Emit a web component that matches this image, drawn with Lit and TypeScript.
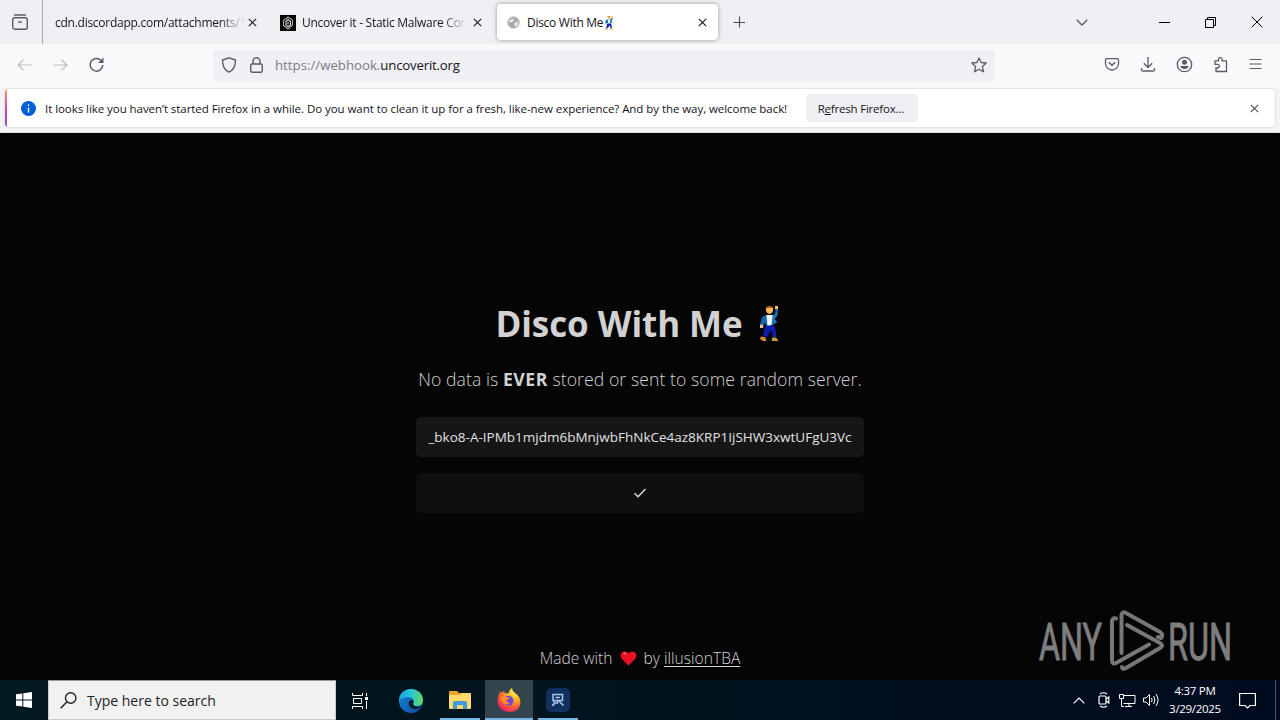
import { LitElement, html, css, svg } from "lit";
import { customElement } from "lit/decorators.js";

const icon = (w: number, h: number, body: unknown, cls = "") =>
  html`<svg class="ico ${cls}" width=${w} height=${h} viewBox="0 0 ${w} ${h}" fill="none" stroke="currentColor">${body}</svg>`;

const cross = (s: number) => icon(s, s, svg`<path d="M.8 .8L${s - 0.8} ${s - 0.8}M${s - 0.8} .8L.8 ${s - 0.8}" stroke-width="1.1"/>`);

const dancer = (w: number, h: number) => html`<svg class="ico" width=${w} height=${h} viewBox="0 0 19 36" preserveAspectRatio="none">
  <path d="M15.500 3L18 3 17.500 9 14.500 13 17 16 13 19 11 20 7 20 4.500 17 3 20 0 19 2 11 6 9 13 9 15 8Z" fill="#1268ae"/>
  <path d="M15 9L17.500 6 17 10 14.500 13 17 16 13 18 11 14 12 10Z" fill="#1a78c4"/>
  <path d="M6.500 9H12.500L11.500 20H7.500Z" fill="#f6f8fa"/>
  <path d="M5 20L12 19 15 21 16.500 31H13L11 24 7 31 3 30Z" fill="#0d1cae"/>
  <path d="M6 1.500H13V5Q12 8 9.600 8T6 5Z" fill="#ffc05a"/>
  <path d="M5.800 3Q5.500 0 9.500 0T13.300 3L12 2H8Z" fill="#a65f1e"/>
  <path d="M15 0H18V3H15Z" fill="#ffc05a"/><path d="M0 18.500L3.500 19 3 22H0Z" fill="#e8c68a"/>
  <path d="M1 30.500L5 31 6.500 35H3L0 33Z" fill="#d98a35"/><path d="M12 31.500H16L18.500 35H12Z" fill="#c2a03a"/>
</svg>`;

@customElement("browser-tabs")
class BrowserTabs extends LitElement {
  static styles = css`
    :host { display: flex; height: 44px; background: #f0f0f4; color: #15141a; font: 12px "Open Sans", sans-serif; align-items: center; }
    .ico { display: block; flex: none; }
    .view { width: 42px; height: 44px; border-right: 1px solid #a9a9b0; display: flex; align-items: center; justify-content: center; color: #5b5b66; box-sizing: content-box; }
    .view .ico { margin-left: -2px; }
    .tab { display: flex; align-items: center; height: 36px; box-sizing: border-box; white-space: nowrap; }
    .one { width: 226px; padding: 1px 12px 0 12px; gap: 3px; }
    .two { width: 228px; padding: 1px 15px 0 11px; gap: 6px; }
    .three { width: 221px; padding: 1px 11px 0 10px; gap: 7px; background: #fff; border-radius: 4px; box-shadow: 0 0 4px rgba(0,0,0,.38); }
    .label { flex: 1; min-width: 0; letter-spacing: -.28px; }
    .one .label { letter-spacing: -.26px; }
    .fade { -webkit-mask-image: linear-gradient(to left, transparent, #000 26px); mask-image: linear-gradient(to left, transparent, #000 26px); }
    .title { display: flex; align-items: center; gap: 2px; }
    .plus { margin-left: 15px; color: #4a4a52; }
    .list { margin-left: auto; margin-right: 71px; color: #5b5b66; }
    .win { display: flex; align-items: center; gap: 35px; margin-right: 17px; color: #000; }
  `;
  render() {
    return html`
      <div class="view">${icon(16, 16, svg`<path d="M2.500 1H13.500" stroke-width="1.300" stroke-linecap="round"/><rect x=".7" y="3.700" width="14.600" height="11.500" rx="2" stroke-width="1.400"/><path d="M6 8H10" stroke-width="1.400"/>`)}</div>
      <div class="tab one"><span class="label fade">cdn.discordapp.com/attachments/1</span>${cross(9)}</div>
      <div class="tab two">
        ${icon(16, 16, svg`<rect width="16" height="16" fill="#000" stroke="none"/><path d="M8 2L12.500 5V10L8 14 3.500 10.500V5.500Z" stroke="#aaa" stroke-width="1.100"/><path d="M8 4.500L10.500 6.500V10L8 11.800 6 10V6.500ZM8 7V9.500" stroke="#ddd" stroke-width="1.100"/>`)}
        <span class="label fade">Uncover it - Static Malware Con</span>${cross(9)}
      </div>
      <div class="tab three">
        ${icon(13, 13, svg`<circle cx="6.500" cy="6.500" r="5.800" fill="#a8a8aa" stroke="#c6c6c8"/><path d="M1.500 5.500L5 2.500 7 3.500 5.500 6 3 6.500ZM7 7L11 5.500 11 9 8 11Z" fill="#e7e7e8" stroke="none"/>`)}
        <span class="label title">Disco With Me${dancer(8, 14)}</span>${cross(9)}
      </div>
      ${icon(12, 12, svg`<path d="M6.500 .5V11.500M.5 6.500H12" stroke-width="1.100"/>`, "plus")}
      ${icon(12, 7, svg`<path d="M.7 .8L6 6 11.300 .8" stroke-width="1.300"/>`, "list")}
      <div class="win">
        ${icon(11, 11, svg`<path d="M0 5.500H11"/>`)}
        ${icon(11, 11, svg`<path d="M.5 2.500H8.500V10.500H.5ZM2.500 2.500V.5H10.500V8.500H8.500"/>`)}
        ${icon(12, 12, svg`<path d="M.7 .7L11.300 11.300M11.300 .7L.7 11.300"/>`)}
      </div>`;
  }
}

@customElement("browser-nav")
class BrowserNav extends LitElement {
  static styles = css`
    :host { display: flex; height: 44px; background: #f9f9fb; color: #5b5b66; align-items: center; box-sizing: border-box; padding: 0 17px 4px 17px; }
    .ico { display: block; flex: none; }
    .moves { display: flex; align-items: center; gap: 21px; width: 196px; height: 40px; padding-top: 1px; box-sizing: border-box; }
    .dim { color: #bdbdc3; }
    .url { display: flex; align-items: center; width: 782px; height: 32px; margin-top: 4px; background: #f0f0f4; border-radius: 2px; box-sizing: border-box; padding: 0 8px 2px; font: 13.200px "Open Sans", sans-serif; }
    .text { flex: 1; padding: 0 0 1px 12px; color: #7c7c84; letter-spacing: .02px; }
    .text b { font-weight: 400; color: #15141a; letter-spacing: -.18px; }
    .lock { margin-left: 13px; }
    .tools { display: flex; align-items: center; gap: 20px; margin-left: auto; margin-right: 2px; padding-top: 1px; }
    .tools .ico:last-child { margin-right: -1px; }
  `;
  render() {
    return html`
      <div class="moves">
        ${icon(15, 12, svg`<path d="M14.500 6H1M6.500 .8L1 6 6.500 11.200" stroke-width="1.200"/>`, "dim")}
        ${icon(15, 12, svg`<path d="M.5 6H14M8.500 .8L14 6 8.500 11.200" stroke-width="1.200"/>`, "dim")}
        ${icon(15, 15, svg`<path d="M13.800 8A6.300 6.300 0 1 1 11.800 3.200" stroke-width="1.500"/><path d="M14.500 .6V6H9Z" fill="currentColor" stroke="none"/>`)}
      </div>
      <div class="url">
        ${icon(16, 16, svg`<path d="M8 .8L14.500 3Q14.700 12 8 15.200 1.300 12 1.500 3Z" stroke-width="1.400" stroke-linejoin="round"/>`)}
        ${icon(13, 16, svg`<rect x=".7" y="7" width="11.600" height="8.300" rx="1.500" stroke-width="1.400"/><path d="M3 7V4.200A3.500 3.500 0 0 1 10 4.200V7" stroke-width="1.400"/>`, "lock")}
        <span class="text">https://webhook.<b>uncoverit.org</b></span>
        ${icon(16, 16, svg`<path d="M8 1L10.100 5.500 15.200 6 11.400 9.400 12.500 14.800 8 12.200 3.500 14.800 4.600 9.400 .8 6 5.900 5.500Z" stroke-width="1.300" stroke-linejoin="round"/>`)}
      </div>
      <div class="tools">
        ${icon(16, 16, svg`<path d="M2.700 1.700H13.300Q14.500 1.700 14.500 3V6.500A6.500 6.500 0 0 1 1.500 6.500V3Q1.500 1.700 2.700 1.700Z" stroke-width="1.300"/><path d="M4.800 5.300L8 8.200 11.200 5.300" stroke-width="1.500"/>`)}
        ${icon(16, 16, svg`<path d="M8 0V10.500M3.800 6.300L8 10.500 12.200 6.300M1.500 11V12.800Q1.500 14 3 14H13Q14.500 14 14.500 12.800V11" stroke-width="1.300"/>`)}
        ${icon(17, 17, svg`<circle cx="8.500" cy="8.500" r="7.200" stroke-width="1.300"/><circle cx="8.500" cy="6.200" r="2.500" fill="currentColor" stroke="none"/><path d="M4.300 10H12.700Q12 13 8.500 13T4.300 10Z" fill="currentColor" stroke="none"/>`)}
        ${icon(16, 16, svg`<path d="M2 5.500V3.800H5.500V2.500Q5.500 .7 7.300 .7T9 2.500V3.800H13.500V14.500H3V11H4.500Q6.500 10.500 6.500 9T4.500 7.300H2V5.500" stroke-width="1.300" stroke-linejoin="round"/>`)}
        ${icon(13, 13, svg`<path d="M.5 1.500H12.500M.5 6H12.500M.5 10.500H12.500" stroke-width="1.200"/>`)}
      </div>`;
  }
}

@customElement("refresh-notice")
class RefreshNotice extends LitElement {
  static styles = css`
    :host { display: block; height: 45px; background: #f4f4f6; box-sizing: border-box; border-bottom: 1px solid #dcdcdf; padding: 1px 5px 4px 5px; font: 11.500px "Open Sans", sans-serif; color: #15141a; }
    .bar { display: flex; align-items: center; height: 38px; background: #fff; border-radius: 4px; box-shadow: 0 0 2px rgba(0,0,0,.25); overflow: hidden; }
    .stripe { width: 2px; height: 38px; background: linear-gradient(#f2a05c, #d8489a 50%, #8651b8); }
    .ico { display: block; flex: none; }
    .info { margin-left: 14px; }
    .msg { margin-left: 9px; width: 761px; white-space: nowrap; letter-spacing: -.055px; }
    .btn { width: 112px; height: 28px; border-radius: 4px; border: 0; padding: 0 2px 0 0; background: #f0f0f4; font: inherit; color: inherit; letter-spacing: -.2px; }
    .btn u { text-underline-offset: 1px; }
    .x { margin: 0 16px 0 auto; color: #4a4a50; }
  `;
  render() {
    return html`<div class="bar">
      <div class="stripe"></div>
      ${icon(15, 15, svg`<circle cx="7.500" cy="7.500" r="7.500" fill="#0560d8" stroke="none"/><path d="M7.500 3.500V5M7.500 6.500V11.500" stroke="#fff" stroke-width="1.400"/>`, "info")}
      <span class="msg">It looks like you haven’t started Firefox in a while. Do you want to clean it up for a fresh, like-new experience? And by the way, welcome back!</span>
      <button class="btn">R<u>e</u>fresh Firefox…</button>
      <span class="x">${cross(9)}</span>
    </div>`;
  }
}

@customElement("disco-page")
class DiscoPage extends LitElement {
  static styles = css`
    :host { display: flex; flex-direction: column; align-items: center; height: 547px; background: #050505; color: #d2d2d2; box-sizing: border-box; font-family: "Open Sans", sans-serif; position: relative; }
    .ico { display: block; flex: none; }
    h1 { display: flex; align-items: center; gap: 17px; height: 52px; margin: 164px 6px 0 0; font-size: 35px; font-weight: 700; white-space: nowrap; }
    h1 .ico { margin-top: 2px; }
    .name { letter-spacing: -.08px; }
    p { margin: 17px 0 0; height: 26px; line-height: 26px; font-size: 17.600px; font-weight: 300; white-space: nowrap; letter-spacing: .08px; }
    p b { font-weight: 700; letter-spacing: .5px; }
    .field, .go { width: 448px; height: 40px; box-sizing: border-box; border: 0; border-radius: 5px; display: flex; align-items: center; justify-content: center; color: #e2e2e2; }
    .field { margin-top: 25px; background: #161616; font-size: 13.500px; white-space: nowrap; }
    .go { margin-top: 16px; background: #0f0f0f; color: #dedede; padding: 0; }
    footer { display: flex; align-items: center; margin-top: 133px; height: 24px; font-size: 15.600px; font-weight: 300; white-space: nowrap; }
    .heart { margin: 0 7px; }
    .link { color: inherit; text-decoration: underline; text-underline-offset: 2px; }
    .mark { position: absolute; left: 1036px; top: 474px; overflow: visible; }
    .mark text { font: 400 52px Roboto, sans-serif; }
  `;
  render() {
    return html`
      <h1><span class="name">Disco With Me</span>${dancer(19, 36)}</h1>
      <p>No data is <b>EVER</b> stored or sent to some random server.</p>
      <div class="field">_bko8-A-IPMb1mjdm6bMnjwbFhNkCe4az8KRP1IjSHW3xwtUFgU3Vc</div>
      <button class="go">${icon(14, 10, svg`<path d="M1.500 5.300L5 8.700 12.500 1" stroke-width="1.400"/>`)}</button>
      <footer><span class="made">Made with</span>
        <svg class="ico heart" width="17" height="15" viewBox="0 0 17 15"><path d="M8.500 14.500L1.500 7.500Q-.5 4 2 1.500 5.500-.7 8.500 2.500 11.500-.7 15 1.500 17.500 4 15.500 7.500Z" fill="#e81224"/><path d="M3 2.500Q5-.0 7 3L5 4Z" fill="#f0505c"/></svg>
        <span class="by">by <a class="link">illusionTBA</a></span></footer>
      <svg class="mark" width="200" height="68" viewBox="0 0 200 68">
        <g fill="#7e7e7e" stroke="#7e7e7e" stroke-width="1"><text x="3" y="52.500" textLength="63" lengthAdjust="spacingAndGlyphs">ANY</text>
        <text x="132" y="52.500" textLength="64" lengthAdjust="spacingAndGlyphs">RUN</text></g>
        <g fill="none" stroke="#777" stroke-width="4" stroke-linejoin="round" stroke-linecap="round">
          <path d="M80 11.500Q76 10.500 76 15V53Q76 58 80 56L113 37.500"/>
          <path d="M85.500 46V8Q86 4 90 6L124 25Q128 28 125 31L122 30"/>
          <path d="M91 18L124 36Q128 39 124 41L90 61Q86 63 86 60"/>
        </g>
      </svg>`;
  }
}

@customElement("task-bar")
class TaskBar extends LitElement {
  static styles = css`
    :host { display: flex; height: 40px; background: linear-gradient(90deg, #021820, #02141d 45%, #010e1e 80%, #010b20); color: #fff; font-family: "Open Sans", sans-serif; }
    .ico { display: block; flex: none; }
    .start, .app { width: 48px; height: 40px; display: flex; align-items: center; justify-content: center; box-sizing: border-box; }
    .search { width: 288px; height: 40px; box-sizing: border-box; border: 1px solid #c9c9c9; border-top-color: #999; background: #f1f1f1; color: #222; display: flex; align-items: center; padding-left: 11px; gap: 10px; font-size: 14px; }
    .apps { display: flex; gap: 1px; }
    .app { width: 48px; margin-left: 0; padding-top: 1px; }
    .edge { margin-right: 1px; padding-left: 2px; }
    .open { width: 40px; margin: 0 4px; border-bottom: 2px solid #75b8ea; }
    .task { margin-right: 1px; }
    .open.folder { margin-left: 4px; }
    .active { background: #35454e; border-bottom: 2px solid #75b8ea; }
    .tray { margin-left: auto; display: flex; align-items: center; }
    .cam { margin-left: 13px; } .net { margin-left: 9px; } .vol { margin-left: 7px; }
    .clock { width: 56px; margin-left: 7px; text-align: center; font-size: 11.500px; line-height: 18px; white-space: nowrap; letter-spacing: -.3px; }
    .note { margin-left: 16px; margin-right: 19px; }
    .peek { width: 1px; height: 40px; background: #4d5868; margin-right: 4px; }
  `;
  render() {
    return html`
      <div class="start">${icon(16, 16, svg`<path d="M0 2.300L6.300 1.400V7.500H0ZM7.300 1.300L16 0V7.500H7.300ZM0 8.500H6.300V14.600L0 13.700ZM7.300 8.500H16V16L7.300 14.700Z" fill="#fff" stroke="none"/>`)}</div>
      <div class="search">${icon(17, 17, svg`<circle cx="10.700" cy="6" r="5.200" stroke-width="1.400"/><path d="M7 9.800L.7 16.200" stroke-width="1.400"/>`)}<span class="hint">Type here to search</span></div>
      <div class="apps">
        <div class="app task">${icon(16, 16, svg`<path d="M.5 0V2.500H10.500V0M.5 16V13.500H10.500V16M1.500 5.500H9.500V10.500H1.500ZM14.500 0V3M14.500 8V16"/><path d="M13 4H16V7H13Z" fill="#fff" stroke="none"/>`)}</div>
        <div class="app edge"><svg class="ico" width="24" height="24" viewBox="0 0 24 24">
          <defs><linearGradient id="e" x1="0" x2="1"><stop stop-color="#17a9e8"/><stop offset=".55" stop-color="#2dc7cf"/><stop offset="1" stop-color="#66d957"/></linearGradient><linearGradient id="f" x2="1" y2="1"><stop stop-color="#1687d8"/><stop offset="1" stop-color="#0b4a9c"/></linearGradient></defs>
          <circle cx="12" cy="12" r="12" fill="url(#f)"/><path d="M0 10.500C1 3.500 6 0 12 0 19 0 24 5 24 11 24 15 21 17 18 17 15 17 13.500 16 14.500 14 16 11 13 8 9 8 5 8 1.500 10 0 12Z" fill="url(#e)"/><path d="M13 11C10 11 9 14 10.500 17 12 20 17 21 21 18.500L22.500 17.500C20 17.800 15 18 14 15.500 13.500 14 15 13.500 14.500 12Z" fill="#041a25"/></svg></div>
        <div class="app open folder"><svg class="ico" width="22" height="20" viewBox="0 0 22 20"><path d="M0 2Q0 1 1 1H8L10 3H21V18H0Z" fill="#e9a327"/><path d="M0 5H11L13 3H22V18Q22 19 21 19H1Q0 19 0 18Z" fill="#ffd869"/><path d="M4 19V13Q4 11 6 11H16Q18 11 18 13V19H14V15H8V19Z" fill="#3e9bd8"/></svg></div>
        <div class="app active"><svg class="ico" width="24" height="24" viewBox="0 0 24 24"><defs><radialGradient id="g" cx=".75" cy=".15" r=".95"><stop stop-color="#fff04a"/><stop offset=".4" stop-color="#ffad24"/><stop offset=".7" stop-color="#ff5638"/><stop offset="1" stop-color="#e51f68"/></radialGradient></defs>
          <path d="M1 9Q2 5 4 3L5 5 7 3 8 5.500Q11 5 12 5 12 1.500 15 0 15 3 18 5 23 8 23.500 14 23 24 12 24 1 23 .5 13Z" fill="url(#g)"/><circle cx="11.500" cy="12.700" r="5" fill="#7345d2"/><path d="M3 9Q6 7 9 9L13 9.500Q12 11.500 9.500 12 9.500 15 13 14.500 11 17.500 7.500 16 4 14 3 9Z" fill="#ff8a2b"/></svg></div>
        <div class="app open"><svg class="ico" width="24" height="24" viewBox="0 0 24 24"><rect width="24" height="24" rx="5" fill="#12305f"/><path d="M7 6.500H16.500V12.500H7ZM9.500 9.500H14M8 12.500V16.500L6 17.500M11.500 12.500V15H9M13 13L17.500 17.500" fill="none" stroke="#a9c6f0" stroke-width="1.500"/></svg></div>
      </div>
      <div class="tray">
        ${icon(12, 7, svg`<path d="M.7 6.300L6 1 11.300 6.300" stroke-width="1.200"/>`)}
        ${icon(12, 16, svg`<rect x="1" y="4" width="7" height="8" rx="1" stroke-width="1.200"/><path d="M8 7L10.800 5V11L8 9M2 2Q5.500-.5 9 2M2 14Q5.500 16.500 9 14" stroke-width="1.200"/>`, "cam")}
        ${icon(17, 15, svg`<path d="M4.500 2.500H16V10.500H4.500M10 10.500V13.500M6 13.500H13M.5 1.500H4.500V5.500H.5ZM2.500 5.500V13.500H5"/>`, "net")}
        ${icon(17, 14, svg`<path d="M.5 5H3L6.500 1.500V12.500L3 9H.5ZM8.500 5Q9.700 7 8.500 9M10.700 3Q13 7 10.700 11M13 1Q17 7 13 13"/>`, "vol")}
        <div class="clock">4:37 PM<br>3/29/2025</div>
        ${icon(17, 17, svg`<path d="M.6 1.500H16.400V13.500H11L8.500 16 6 13.500H.6Z" stroke-width="1.200"/>`, "note")}
        <div class="peek"></div>
      </div>`;
  }
}

@customElement("app-root")
class AppRoot extends LitElement {
  static styles = css`
    :host { display: flex; flex-direction: column; width: 1280px; height: 720px; overflow: hidden; }
  `;
  render() {
    return html`<browser-tabs></browser-tabs><browser-nav></browser-nav><refresh-notice></refresh-notice><disco-page></disco-page><task-bar></task-bar>`;
  }
}
